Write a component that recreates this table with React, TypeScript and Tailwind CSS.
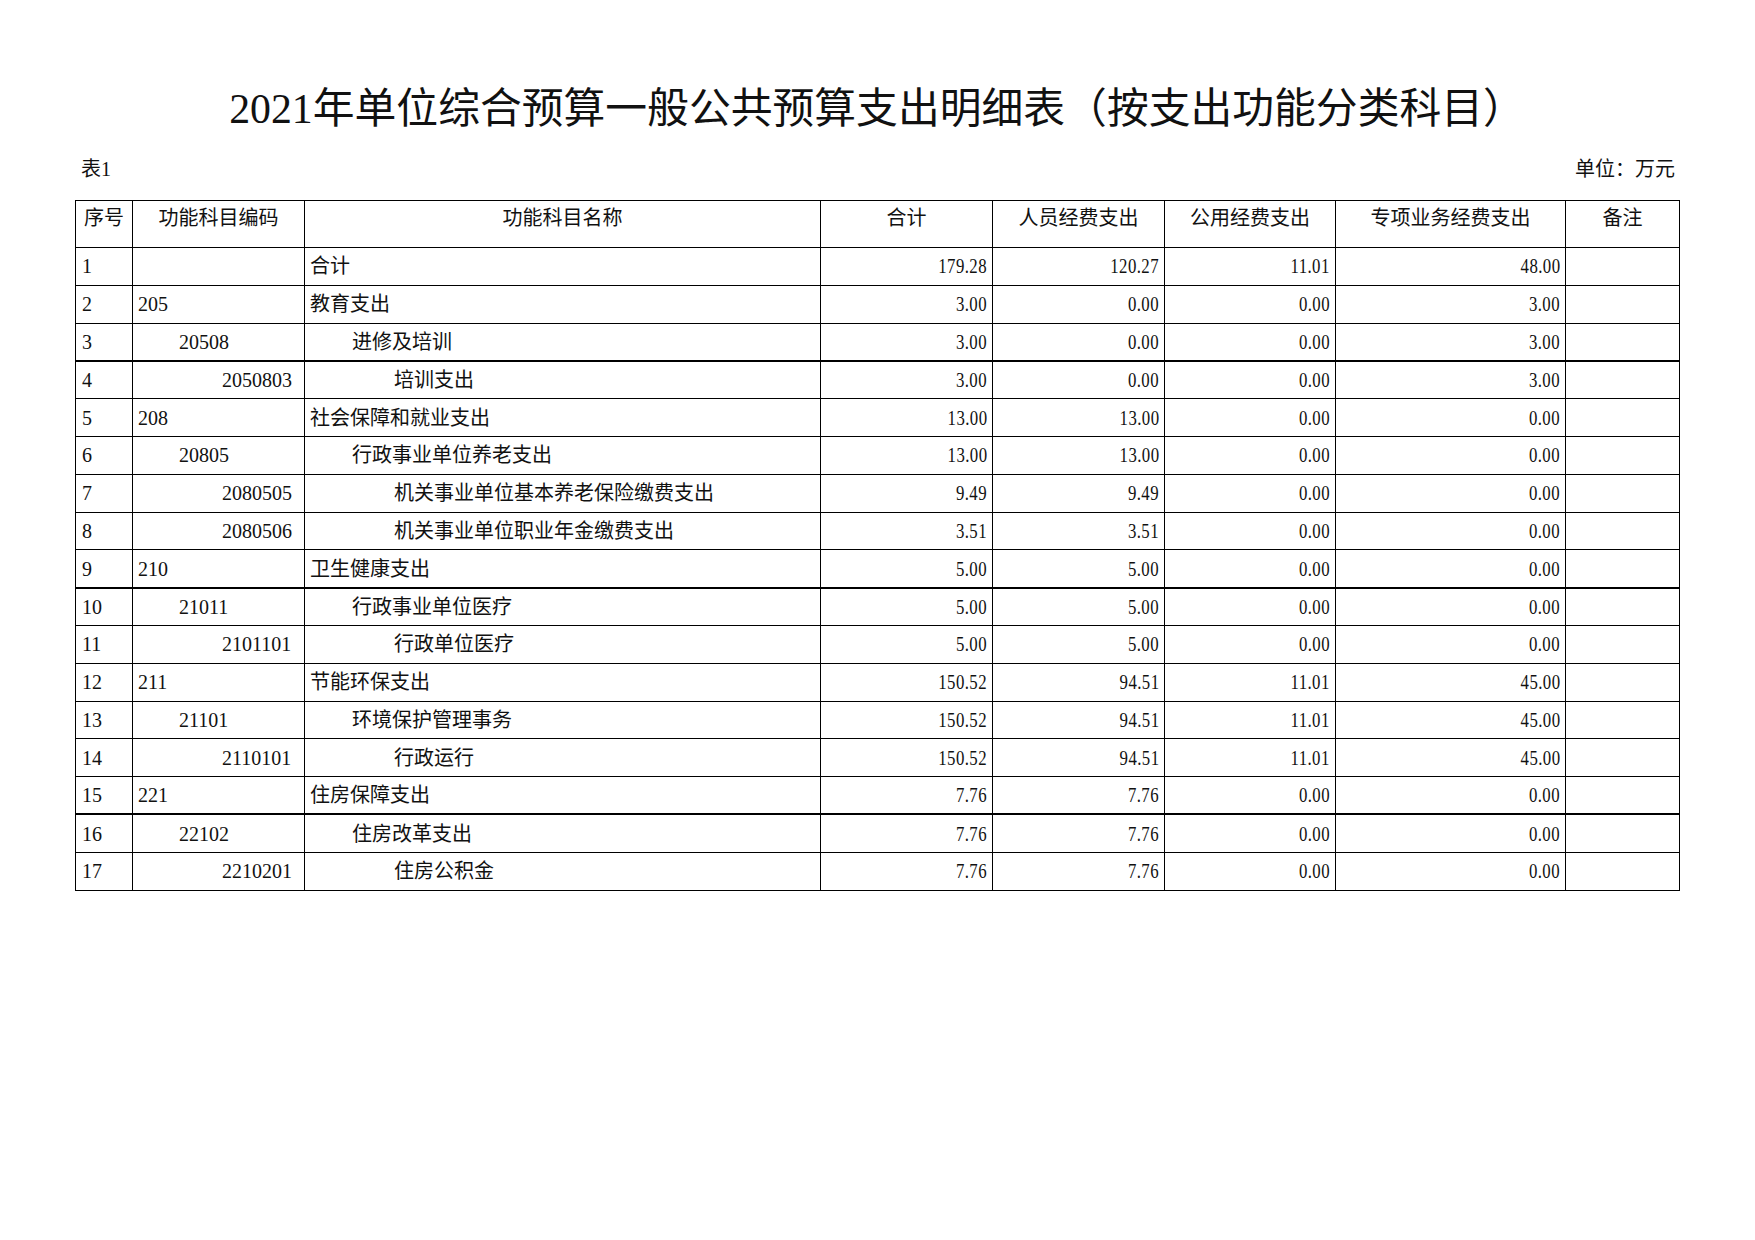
type Row = {
  no: number;
  code: string;
  name: string;
  total: string;
  staff: string;
  public: string;
  project: string;
  thick?: boolean;
};

const rows: Row[] = [
  { no: 1, code: "", name: "合计", total: "179.28", staff: "120.27", public: "11.01", project: "48.00" },
  { no: 2, code: "205", name: "教育支出", total: "3.00", staff: "0.00", public: "0.00", project: "3.00" },
  { no: 3, code: "20508", name: "进修及培训", total: "3.00", staff: "0.00", public: "0.00", project: "3.00" },
  { no: 4, code: "2050803", name: "培训支出", total: "3.00", staff: "0.00", public: "0.00", project: "3.00", thick: true },
  { no: 5, code: "208", name: "社会保障和就业支出", total: "13.00", staff: "13.00", public: "0.00", project: "0.00" },
  { no: 6, code: "20805", name: "行政事业单位养老支出", total: "13.00", staff: "13.00", public: "0.00", project: "0.00" },
  { no: 7, code: "2080505", name: "机关事业单位基本养老保险缴费支出", total: "9.49", staff: "9.49", public: "0.00", project: "0.00" },
  { no: 8, code: "2080506", name: "机关事业单位职业年金缴费支出", total: "3.51", staff: "3.51", public: "0.00", project: "0.00" },
  { no: 9, code: "210", name: "卫生健康支出", total: "5.00", staff: "5.00", public: "0.00", project: "0.00" },
  { no: 10, code: "21011", name: "行政事业单位医疗", total: "5.00", staff: "5.00", public: "0.00", project: "0.00", thick: true },
  { no: 11, code: "2101101", name: "行政单位医疗", total: "5.00", staff: "5.00", public: "0.00", project: "0.00" },
  { no: 12, code: "211", name: "节能环保支出", total: "150.52", staff: "94.51", public: "11.01", project: "45.00" },
  { no: 13, code: "21101", name: "环境保护管理事务", total: "150.52", staff: "94.51", public: "11.01", project: "45.00" },
  { no: 14, code: "2110101", name: "行政运行", total: "150.52", staff: "94.51", public: "11.01", project: "45.00" },
  { no: 15, code: "221", name: "住房保障支出", total: "7.76", staff: "7.76", public: "0.00", project: "0.00" },
  { no: 16, code: "22102", name: "住房改革支出", total: "7.76", staff: "7.76", public: "0.00", project: "0.00", thick: true },
  { no: 17, code: "2210201", name: "住房公积金", total: "7.76", staff: "7.76", public: "0.00", project: "0.00" },
];

const headers = ["序号", "功能科目编码", "功能科目名称", "合计", "人员经费支出", "公用经费支出", "专项业务经费支出", "备注"];

// indent by code level: 3 digits / 5 digits / 7 digits
const codePad = ["pl-[5px]", "pl-[46px]", "pl-[89px]"];
const namePad = ["pl-[5px]", "pl-[47px]", "pl-[89px]"];

function level(code: string) {
  if (code.length >= 7) return 2;
  if (code.length >= 5) return 1;
  return 0;
}

function Num({ v }: { v: string }) {
  return <span className="inline-block origin-right scale-x-[0.84] tracking-[0.5px]">{v}</span>;
}

export default function App() {
  return (
    <div className="w-[1755px] h-[1240px] bg-white text-[#111] font-['Liberation_Serif','Noto_Sans_CJK_SC',serif]">
      <div className="pl-[75px] pt-[84px]">
        <div className="w-[1604px]">
          <h1 className="text-center text-[41.8px] leading-[50px] font-normal">
            2021年单位综合预算一般公共预算支出明细表（按支出功能分类科目）
          </h1>

          <div className="mt-[21px] flex justify-between text-[20px] leading-[28px]">
            <span className="pl-[6px]">表1</span>
            <span className="pr-[4px]">单位：万元</span>
          </div>

          <table className="mt-[17px] w-[1604px] table-fixed border-collapse border border-black text-[20px] leading-[28px]">
            <colgroup>
              <col className="w-[57px]" />
              <col className="w-[172px]" />
              <col className="w-[516px]" />
              <col className="w-[172px]" />
              <col className="w-[172px]" />
              <col className="w-[171px]" />
              <col className="w-[230px]" />
              <col className="w-[114px]" />
            </colgroup>
            <thead>
              <tr className="h-[47px]">
                {headers.map((h) => (
                  <th key={h} className="border border-black p-0 pt-[3px] align-top text-center font-normal">
                    {h}
                  </th>
                ))}
              </tr>
            </thead>
            <tbody>
              {rows.map((r) => {
                const lv = level(r.code);
                const line = r.thick ? "border-t-2" : "";
                return (
                  <tr key={r.no} className="h-[37.8px]">
                    <td className={`border border-black p-0 pl-[6px] align-middle ${line}`}>{r.no}</td>
                    <td className={`border border-black p-0 align-middle ${codePad[lv]} ${line}`}>{r.code}</td>
                    <td className={`border border-black p-0 align-middle whitespace-nowrap ${namePad[r.no === 1 ? 0 : lv]} ${line}`}>
                      {r.name}
                    </td>
                    <td className={`border border-black p-0 pr-[5px] text-right align-middle ${line}`}>
                      <Num v={r.total} />
                    </td>
                    <td className={`border border-black p-0 pr-[5px] text-right align-middle ${line}`}>
                      <Num v={r.staff} />
                    </td>
                    <td className={`border border-black p-0 pr-[5px] text-right align-middle ${line}`}>
                      <Num v={r.public} />
                    </td>
                    <td className={`border border-black p-0 pr-[5px] text-right align-middle ${line}`}>
                      <Num v={r.project} />
                    </td>
                    <td className={`border border-black p-0 align-middle ${line}`}></td>
                  </tr>
                );
              })}
            </tbody>
          </table>
        </div>
      </div>
    </div>
  );
}
